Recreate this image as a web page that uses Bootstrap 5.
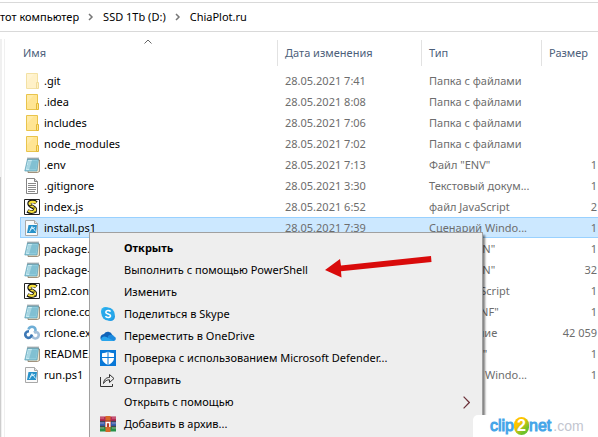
<!DOCTYPE html>
<html lang="ru">
<head>
<meta charset="utf-8">
<meta name="viewport" content="width=device-width, initial-scale=1">
<title>ChiaPlot.ru</title>
<link href="https://cdn.jsdelivr.net/npm/bootstrap@5.3.0/dist/css/bootstrap.min.css" rel="stylesheet">
<style>
body { font-family: "Noto Sans", "Open Sans", sans-serif; font-size: 11px; line-height: 20px; color: #000; background: #fff; }
.path-bar { margin-top: 2px; height: 30px; border-top: 1px solid #d9d9d9; border-bottom: 1px solid #d9d9d9; }
.path-bar a { color: #000; }
.rail { width: 5px; margin-top: 7px; border-right: 1px solid #f0f0f0; background: linear-gradient(90deg, #f0f0f0 2px, #fff 2px); }
.rail-thumb { width: 1px; margin-top: 138px; background: #cdcdcd; }
.listing { padding: 8px 0 0 15px; }
.files { table-layout: fixed; width: 100%; border-collapse: separate; border-spacing: 0; }
.files th { height: 26px; padding: 0 0 0 7px; font-weight: 400; color: #4c607a; border-right: 1px solid #e2e2e2; }
.files th:first-child { padding-left: 3px; }
.files th:last-child { border-right: 0; }
.files td { height: 21px; padding: 0 0 0 7px; color: #6d6d6d; white-space: nowrap; overflow: hidden; border: solid transparent; border-width: 1px 0; line-height: 19px; }
.files td:first-child { padding-left: 3px; color: #000; border-left-width: 1px; }
.files td:last-child { text-align: right; padding-right: 1px; }
.files .picked td { background: #cce8ff; border-color: #99d1ff; }
.files tbody::before { content: ""; display: block; height: 4px; }
.col-name { width: 258px; } .col-date { width: 144px; } .col-type { width: 120px; }
.ico { width: 16px; height: 16px; flex: none; }
.sort-mark { left: 144px; top: 39px; }
.ctx { left: 89px; top: 232px; bottom: 0; width: 394px; padding: 4px 0 0; background: #eee; border: 1px solid #a0a0a0; border-bottom: 0; box-shadow: 2px 3px 2px rgba(0,0,0,.5); }
.ctx button { height: 22px; padding: 0 12px 0 10px; gap: 8px; color: #000; background: none; border: 0; width: 100%; text-align: left; }
.ctx button:hover { background: #fff; }
.pointer { left: 234px; top: 20px; }
.stamp { right: 0; bottom: 0; width: 125px; height: 22px; background: #fff; border-top-left-radius: 5px; padding-left: 17px; font: 16px/20px "Liberation Sans", sans-serif; color: #45a5e8; }
.stamp .word { -webkit-text-stroke: 1px #45a5e8; }
.stamp .two { width: 15px; height: 18px; border-radius: 8px; line-height: 18px; font-weight: 700; color: #fff; background: linear-gradient(135deg, #ffc400 35%, #6cc22c 75%); }
.stamp .tld { font-size: 14px; color: #c3c6d0; margin-left: 2px; }
</style>
</head>
<body class="vh-100 overflow-hidden position-relative d-flex flex-column">
<svg class="d-none" aria-hidden="true">
  <symbol id="folder" viewBox="0 0 16 16"><path d="M2.500.500h11v15h-11z" fill="#ffe593" stroke="#e9c44c"/><path d="M3 1h7l-7 8z" fill="#ffefb5" opacity=".6"/><path d="M12.500 9.500h2v6h-2z" fill="#ffe48b" stroke="#e3b936"/></symbol>
  <symbol id="note" viewBox="0 0 16 16"><path d="M4 3h11.500v11.500l-2 1H4z" fill="#efe4cc" stroke="#8a7a62" stroke-width=".8"/><path d="M3.500 2h11l-1.500 12H.8z" fill="#8fcbdc" stroke="#5d9db3" stroke-width=".7"/><path d="M4 3h4L5 13H2z" fill="#c8eaf2"/><path d="M4 5h9M4 7h8.600M3 9h9.500M3 11h9" stroke="#61aabd" stroke-width=".6"/><path d="M4 .5v2M6 .5v2M8 .5v2M10 .5v2M12 .5v2M14 .5v2" stroke="#4d5a60" stroke-width=".8"/></symbol>
  <symbol id="doc" viewBox="0 0 16 16"><path d="M2.500.500h8l3 3v12h-11z" fill="#fff" stroke="#848484"/><path d="M10.500.500v3h3" fill="#ddd" stroke="#848484"/><path d="M4 5.500h8M4 7.500h8M4 9.500h8M4 11.500h8M4 13.500h7" stroke="#8a8a8a"/></symbol>
  <symbol id="script" viewBox="0 0 16 16"><path d="M.5.500h15v15H.5z" fill="#fff" stroke="#222"/><path d="M12.300 3.800C10 1.500 5.200 2.300 5.200 4.700c0 3 6 3 6 5.800 0 2.800-4.500 3.300-7.700 1.300" fill="none" stroke="#111" stroke-width="3.800"/><path d="M12 3.800C10 2.200 5.500 2.500 5.500 4.700c0 2.800 5.700 3 5.700 5.800 0 2.500-4 3-7 1.300" fill="none" stroke="#f5df3d" stroke-width="2.200"/><path d="M5 6.500h3M8 9h3M10 13h3" stroke="#111" stroke-width=".7"/></symbol>
  <symbol id="ps" viewBox="0 0 16 16"><path d="M1.500.500h9l3 3v12h-12z" fill="#fafafa" stroke="#a8a8a8"/><path d="M10.500.500v3h3" fill="#e5e5e5" stroke="#a8a8a8"/><path d="M4.500 5H13l-1 8H3z" fill="#2791c9"/><path d="M5.500 12 8 6.500l3.500 5M6 9.500l5-2" fill="none" stroke="#d3effc"/></symbol>
  <symbol id="rclone" viewBox="0 0 16 16"><g fill="none" stroke-width="2.600"><path d="M4.500 4.500a3.600 3.600 0 0 1 7 0c.3 1.500-.3 2.500-1 3.300" stroke="#6eaed6"/><path d="M10 7.500c3-1.500 5 .8 4.700 3-.3 2.500-3 3.700-5 2.500L7.500 11" stroke="#a4bfd9"/><path d="M5 6.300c-3 0-4.200 2.200-3.500 4.500 1 2.600 4 2.700 5.500.7l1-2" stroke="#3d78b5"/></g></symbol>
</svg>

<nav class="path-bar flex-shrink-0" aria-label="Путь">
  <ol class="list-unstyled d-flex align-items-center h-100 m-0">
    <li><a class="text-decoration-none" href="#">тот компьютер</a></li>
    <li class="d-flex align-items-center"><svg class="mx-2" width="8" height="8" viewBox="0 0 8 8" aria-hidden="true"><path d="M2 1l3 3-3 3" fill="none" stroke="#777" stroke-width="1.500"/></svg><a class="text-decoration-none" href="#">SSD 1Tb (D:)</a></li>
    <li class="d-flex align-items-center"><svg class="mx-2" width="8" height="8" viewBox="0 0 8 8" aria-hidden="true"><path d="M2 1l3 3-3 3" fill="none" stroke="#777" stroke-width="1.500"/></svg><a class="text-decoration-none" href="#">ChiaPlot.ru</a></li>
  </ol>
</nav>

<main class="d-flex flex-grow-1 overflow-hidden">
  <div class="rail flex-shrink-0 d-flex"><div class="rail-thumb"></div></div>
  <div class="listing flex-grow-1 overflow-hidden">
    <table class="files">
      <colgroup><col class="col-name"><col class="col-date"><col class="col-type"><col></colgroup>
      <thead><tr><th scope="col">Имя</th><th scope="col">Дата изменения</th><th scope="col">Тип</th><th scope="col">Размер</th></tr></thead>
      <tbody>
        <tr><td><div class="d-flex align-items-center gap-1"><svg class="ico opacity-50"><use href="#folder"/></svg>.git</div></td><td>28.05.2021 7:41</td><td>Папка с файлами</td><td></td></tr>
        <tr><td><div class="d-flex align-items-center gap-1"><svg class="ico"><use href="#folder"/></svg>.idea</div></td><td>28.05.2021 8:08</td><td>Папка с файлами</td><td></td></tr>
        <tr><td><div class="d-flex align-items-center gap-1"><svg class="ico"><use href="#folder"/></svg>includes</div></td><td>28.05.2021 7:06</td><td>Папка с файлами</td><td></td></tr>
        <tr><td><div class="d-flex align-items-center gap-1"><svg class="ico"><use href="#folder"/></svg>node_modules</div></td><td>28.05.2021 7:02</td><td>Папка с файлами</td><td></td></tr>
        <tr><td><div class="d-flex align-items-center gap-1"><svg class="ico"><use href="#note"/></svg>.env</div></td><td>28.05.2021 7:13</td><td>Файл "ENV"</td><td>1</td></tr>
        <tr><td><div class="d-flex align-items-center gap-1"><svg class="ico"><use href="#doc"/></svg>.gitignore</div></td><td>28.05.2021 3:30</td><td>Текстовый докум...</td><td>1</td></tr>
        <tr><td><div class="d-flex align-items-center gap-1"><svg class="ico"><use href="#script"/></svg>index.js</div></td><td>28.05.2021 6:52</td><td>файл JavaScript</td><td>2</td></tr>
        <tr class="picked"><td><div class="d-flex align-items-center gap-1"><svg class="ico"><use href="#ps"/></svg>install.ps1</div></td><td>28.05.2021 7:39</td><td>Сценарий Windo...</td><td>1</td></tr>
        <tr><td><div class="d-flex align-items-center gap-1"><svg class="ico"><use href="#note"/></svg>package.json</div></td><td></td><td>Файл "JSON"</td><td>1</td></tr>
        <tr><td><div class="d-flex align-items-center gap-1"><svg class="ico"><use href="#note"/></svg>package-lock.json</div></td><td></td><td>Файл "JSON"</td><td>32</td></tr>
        <tr><td><div class="d-flex align-items-center gap-1"><svg class="ico"><use href="#script"/></svg>pm2.config.js</div></td><td></td><td>файл JavaScript</td><td>1</td></tr>
        <tr><td><div class="d-flex align-items-center gap-1"><svg class="ico"><use href="#note"/></svg>rclone.conf</div></td><td></td><td>Файл "CONF"</td><td>1</td></tr>
        <tr><td><div class="d-flex align-items-center gap-1"><svg class="ico"><use href="#rclone"/></svg>rclone.exe</div></td><td></td><td>Приложение</td><td>42 059</td></tr>
        <tr><td><div class="d-flex align-items-center gap-1"><svg class="ico"><use href="#note"/></svg>README.md</div></td><td></td><td>Файл "MD"</td><td>1</td></tr>
        <tr><td><div class="d-flex align-items-center gap-1"><svg class="ico"><use href="#ps"/></svg>run.ps1</div></td><td></td><td>Сценарий Windo...</td><td>1</td></tr>
      </tbody>
    </table>
  </div>
</main>
<svg class="sort-mark position-absolute" width="8" height="5" viewBox="0 0 8 5" aria-hidden="true"><path d="M.5 4.500 4 1l3.500 3.500" fill="none" stroke="#666"/></svg>

<div class="ctx position-absolute" role="menu">
  <button type="button" role="menuitem" class="d-flex align-items-center fw-bold"><span class="ico"></span>Открыть</button>
  <button type="button" role="menuitem" class="d-flex align-items-center"><span class="ico"></span>Выполнить с помощью PowerShell</button>
  <button type="button" role="menuitem" class="d-flex align-items-center"><span class="ico"></span>Изменить</button>
  <button type="button" role="menuitem" class="d-flex align-items-center"><svg class="ico" viewBox="0 0 16 16"><circle cx="5.500" cy="5.500" r="4.500" fill="#2bb3f0"/><circle cx="10.500" cy="10.500" r="4.500" fill="#1f9be6"/><circle cx="8" cy="8" r="6.500" fill="#28a8ea"/><path d="M10.500 5.600C9.600 4 5.800 4.200 5.800 6.200c0 2.200 4.700 1.200 4.700 3.500 0 2.200-4 2.300-5 .4" fill="none" stroke="#fff" stroke-width="1.600"/></svg>Поделиться в Skype</button>
  <button type="button" role="menuitem" class="d-flex align-items-center"><svg class="ico" viewBox="0 0 16 16"><path d="M4 6a4.600 4.600 0 0 1 8.300 1L8 11 1 12C-.5 9 1 6.500 4 6z" fill="#0f62b8"/><path d="M8 8c2-2 5.500-1.500 6 .5 2.500.5 2.500 4.500-.5 4.500H8z" fill="#1c8ade"/><path d="M1 12c0-3 3-4.500 5.500-3l7.500 4H3.500C2 13 1.200 12.600 1 12z" fill="#28a4ec"/></svg>Переместить в OneDrive</button>
  <button type="button" role="menuitem" class="d-flex align-items-center"><svg class="ico" viewBox="0 0 16 16"><path d="M0 0h16v16H0z" fill="#0878d7"/><path d="M8 1.500c1.500 1.200 3.500 1.700 6 1.700V8c0 3-2.500 5.500-6 7-3.500-1.500-6-4-6-7V3.200c2.500 0 4.500-.5 6-1.700z" fill="#fff"/><path d="M8 1v14M1.500 7.500h13" stroke="#0878d7"/></svg>Проверка с использованием Microsoft Defender...</button>
  <button type="button" role="menuitem" class="d-flex align-items-center"><svg class="ico" viewBox="0 0 16 16" fill="none" stroke="#333"><path d="M.5 5v9.500h12V12"/><path d="M3.500 11.500C4 7.500 6 5.500 9.500 5.500v-3L14 6.500l-4.500 4v-2.700c-2.500 0-4.500 1-6 3.700z" stroke-linejoin="round"/></svg>Отправить</button>
  <button type="button" role="menuitem" aria-haspopup="true" class="d-flex align-items-center"><span class="ico"></span>Открыть с помощью<svg class="ms-auto" width="7" height="13" viewBox="0 0 7 13"><path d="M.6.600 6.300 6.500.6 12.400" fill="none" stroke="#6b3038" stroke-width="1.200"/></svg></button>
  <button type="button" role="menuitem" class="d-flex align-items-center"><svg class="ico" viewBox="0 0 16 16"><path d="M0 .5h16V5H0z" fill="#b52a54"/><path d="M0 5.500h16V10H0z" fill="#3760b0"/><path d="M0 10.500h16v5H0z" fill="#269247"/><path d="M0 2h4M12 2h4M0 7h4M12 7h4M0 12h4M12 12h4" stroke="#e8b8bd" stroke-width=".6"/><path d="M5.500 0h5v16h-5z" fill="#d6692a"/><path d="M0 5.300h16M0 10.300h16" stroke="#302a32"/><path d="M5 5h6v6H5z" fill="#b83d28"/><path d="M6.200 11V6.500h3.600V11" fill="none" stroke="#fff" stroke-width="1.400"/></svg>Добавить в архив...</button>
  <svg class="pointer position-absolute pe-none" width="110" height="28" viewBox="0 0 110 28" aria-hidden="true"><path d="M1 17 16 6l1 6.500 90-9.500.5 6L17 18.200l.5 6.300z" fill="#d90b0b"/></svg>
</div>

<div class="stamp position-absolute d-flex align-items-center" aria-label="clip2net.com"><span class="word">clip</span><span class="two text-center">2</span><span class="word">net</span><span class="tld">.com</span></div>
<script src="https://cdn.jsdelivr.net/npm/bootstrap@5.3.0/dist/js/bootstrap.bundle.min.js"></script>
</body>
</html>
